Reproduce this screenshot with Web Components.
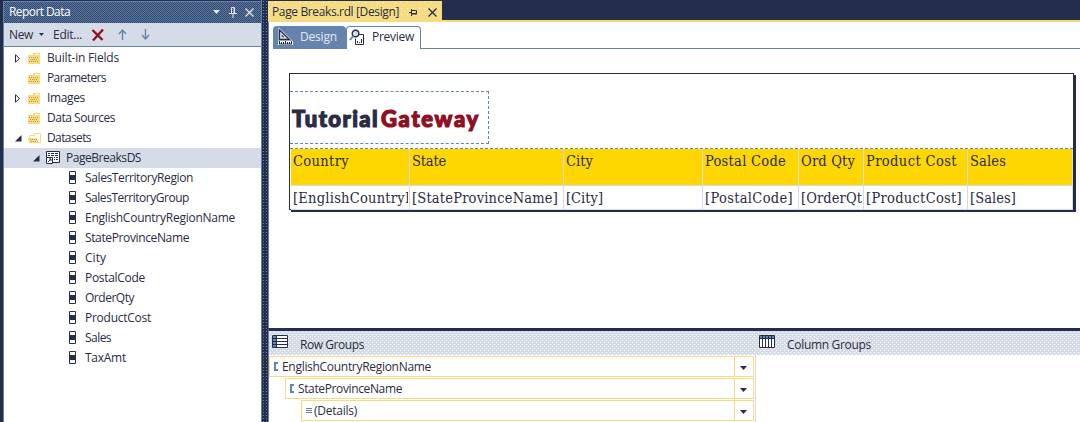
<!DOCTYPE html>
<html lang="en"><head><meta charset="utf-8"><title>Page Breaks.rdl [Design]</title>
<style>
html,body{margin:0;height:422px;overflow:hidden}
body{background:#242d49;color:#292c42;font:12px/20px "Open Sans","Noto Sans",sans-serif}
</style></head><body>
<report-designer></report-designer>
<script>
const define=(name,make,after)=>customElements.define(name,class extends HTMLElement{
  connectedCallback(){
    if(this.shadowRoot)return;
    this.attachShadow({mode:'open'}).innerHTML=make(this);
    if(after)after(this);
  }
});

/* A label whose letter spacing is set so that it fills the width in "w". */
define('fit-label',()=>`<style>:host{display:inline-block;white-space:pre;flex:none}</style><span><slot></slot></span>`,el=>{
  const w=+el.getAttribute('w'),n=el.textContent.length;
  const span=el.shadowRoot.querySelector('span');
  if(w)el.style.letterSpacing=((w-span.getBoundingClientRect().width)/n).toFixed(3)+'px';
});

const icons={
  folder:[14,12,'<path d="M0 3h5V1h7v11H0z" fill="#f5dc83"/><path d="M7 2.500h4" stroke="#fff"/><path d="M1 5.500h9M2 7.500h8M1 9.500h9" stroke="#c79132" stroke-dasharray="1 1"/>'],
  openfolder:[14,12,'<path d="M1.500 10.500v-7h5v-2h6v9z" fill="#fff" stroke="#f5dc83"/><path d="M0 6h9l2 5H1z" fill="#f5dc83"/><path d="M2 7.500h7M3 9.500h6" stroke="#c79132" stroke-dasharray="1 1"/>'],
  dataset:[14,13,'<path d="M.5 6V.5h13v11H7" fill="#fff" stroke="#242d49"/><path d="M2 2.500h2m1 0h3m1 0h3M2 4.500h2m1 0h3m1 0h3M8 6.500h1m1 0h2M8 8.500h1m1 0h2" stroke="#242d49"/><path d="M.5 6.500h6v6h-6z" fill="#fff" stroke="#242d49"/><path d="M2 11l3-3M3 8h2v2" fill="none" stroke="#242d49"/>'],
  field:[7,13,'<path d="M.5.5h6v12h-6z" fill="#fff" stroke="#242d49"/><path d="M0 4h7v5H0z" fill="#242d49"/>'],
  closed:[6,9,'<path d="M.5.8v7.400l4-3.700z" fill="#fff" stroke="#292c42"/>'],
  opened:[7,7,'<path d="M6.500 0v6.500H0z" fill="#242d49"/>'],
  caret:[7,4,'<path d="M0 0h7L3.500 4z" fill="currentColor"/>'],
  small:[5,3,'<path d="M0 0h5L2.500 3z" fill="#242d49"/>'],
  pin:[8,11,'<path d="M2.500 6V.5h3V6M0 6.500h8M4 7v4" fill="none" stroke="currentColor"/><path d="M5 1v5" stroke="currentColor"/>'],
  hpin:[8,7,'<path d="M0 3.500h3M2.500 0v7M3 1.500h4.500v3H3M3 5h5" fill="none" stroke="currentColor"/>'],
  close:[9,9,'<path d="M.5.5l8 8m0-8l-8 8" fill="none" stroke="currentColor" stroke-width="1.300"/>'],
  del:[14,14,'<path d="M1.500 2l10 10M12 1.500L2 12.500" stroke="#8e1022" stroke-width="2.400"/>'],
  up:[9,11,'<path d="M4.500 11V1M1 5l3.500-4L8 5" fill="none" stroke="#6584ad" stroke-width="1.400"/>'],
  down:[9,11,'<path d="M4.500 0v10M1 6l3.500 4L8 6" fill="none" stroke="#6584ad" stroke-width="1.400"/>'],
  ruler:[15,16,'<path d="M1.500 1v9.500h10z" fill="none" stroke="#d5dce7" stroke-width="2.500"/><path d="M1.500 1v9.500h10z" fill="#d5dce7" stroke="#242d49" stroke-width="1.300"/><path d="M4 6v2h2z" fill="#6584ad" stroke="#242d49" stroke-width=".5"/><path d="M0 12h15v4H0z" fill="#fff"/><path d="M1 15h13M1.500 12v3m2-2v2m2-2v2m2-3v3m2-2v2m2-2v2m2-3v3" stroke="#242d49"/>'],
  preview:[16,16,'<path d="M7 5.500h7.500v10h-8v-6" fill="#fff" stroke="#242d49"/><circle cx="6.500" cy="4.500" r="3.300" fill="#d5dce7" stroke="#242d49" stroke-width="1.400"/><path d="M4.200 7L1 11" stroke="#6584ad" stroke-width="2"/><path d="M8.500 14v-2m2 2v-1m2 1v-4" stroke="#242d49"/>'],
  rows:[16,13,'<path d="M.5.5h15v12H.5z" fill="#fff" stroke="#242d49"/><path d="M1 1h3v11H1z" fill="#6584ad"/><path d="M0 3.500h16M0 6.500h16M0 9.500h16M4.500 0v13" stroke="#242d49"/>'],
  cols:[16,13,'<path d="M.5.5h15v12H.5z" fill="#fff" stroke="#242d49"/><path d="M1 1h14v2H1z" fill="#6584ad"/><path d="M0 3.500h16M3.500 1v12M6.500 1v12M9.500 1v12M12.500 1v12" stroke="#242d49"/>'],
  bracket:[4,9,'<path d="M4 1H1v7h3" fill="none" stroke="#6584ad" stroke-width="2"/>'],
  details:[6,5,'<path d="M0 .5h6M0 2.500h6M0 4.500h6" stroke="#6584ad"/>']
};
define('ui-icon',el=>{
  const [w,h,d]=icons[el.getAttribute('name')];
  return `<style>:host{display:block;flex:none;width:${w}px;height:${h}px}svg{display:block;overflow:visible}</style><svg width="${w}" height="${h}" viewBox="0 0 ${w} ${h}">${d}</svg>`;
});

define('tree-row',el=>{
  const a=n=>el.getAttribute(n);
  return `<style>
  :host{display:flex;height:20px;align-items:center;padding-left:${a('indent')}px;background:${el.hasAttribute('selected')?'#d5dce7':'none'}}
  .arrow{width:${a('icon')==='field'?0:13}px}.ic{margin-top:-1px;width:${a('icon')==='field'?16:a('icon')==='dataset'?20:19}px}
  </style><div class="arrow">${a('arrow')?`<ui-icon name="${a('arrow')}"></ui-icon>`:''}</div><div class="ic"><ui-icon name="${a('icon')}"></ui-icon></div><fit-label w="${a('w')}">${a('label')}</fit-label>`;
});

const tree=[
 ['Built-in Fields',72,11,'folder','closed'],['Parameters',59,11,'folder',''],['Images',38,11,'folder','closed'],
 ['Data Sources',68,11,'folder',''],['Datasets',44,11,'openfolder','opened'],['PageBreaksDS',75,29,'dataset','opened',1],
 ...[['SalesTerritoryRegion',108],['SalesTerritoryGroup',104],['EnglishCountryRegionName',150],['StateProvinceName',104],['City',21],['PostalCode',60],['OrderQty',49],['ProductCost',66],['Sales',26],['TaxAmt',41]].map(r=>[...r,65,'field',''])
];
define('report-data-panel',()=>`<style>
 :host{display:flex;flex-direction:column;width:257px;margin-top:1px;height:421px;background:#fff;border-left:1px solid #6584ad;box-sizing:content-box}
 header{display:flex;align-items:center;height:22px;box-sizing:border-box;padding:0 7px 1px 5px;color:#fff;border-top:1px solid #6584ad;
   background:conic-gradient(#5877a2 25%,#34486b 0 50%,#5877a2 0 75%,#34486b 0) 0 0/2px 2px}
 header fit-label{margin-right:auto}header ui-icon{color:#e4e9f1}
 nav{display:flex;align-items:center;height:24px;box-sizing:border-box;padding-left:5px;background:#d5dce7;border-bottom:1px solid #6584ad}
 main{padding-top:1px}
</style><header><fit-label w="61">Report Data</fit-label><ui-icon name="caret"></ui-icon><ui-icon name="pin" style="margin-left:9px"></ui-icon><ui-icon name="close" style="margin-left:8px"></ui-icon></header>
<nav><fit-label w="24">New</fit-label><ui-icon name="small" style="margin-left:6px"></ui-icon><fit-label w="29" style="margin-left:9px">Edit...</fit-label><ui-icon name="del" style="margin-left:9px"></ui-icon><ui-icon name="up" style="margin-left:13px"></ui-icon><ui-icon name="down" style="margin-left:14px"></ui-icon></nav>
<main>${tree.map(([l,w,i,ic,ar,s])=>`<tree-row label="${l}" w="${w}" indent="${i}" icon="${ic}" arrow="${ar}" ${s?'selected':''}></tree-row>`).join('')}</main>`);

define('tab-strip',()=>`<style>
 :host{display:block}
 .doc{display:flex;align-items:center;box-sizing:border-box;width:174px;height:19px;margin-top:1px;padding:3px 0 0 4px;background:radial-gradient(circle at 1.500px 1.500px,#fff5ce .6px,transparent .8px) 0 0/6px 6px,#f5dc83}
 .line{height:2px;background:#f5dc83}
 .modes{display:flex;background:#fff;height:27px;box-sizing:border-box;padding:4px 0 0 4px;border-left:1px solid #6584ad}
 .modes>div{display:flex;align-items:center;box-sizing:border-box;height:23px;border-bottom:1px solid #6584ad;padding-bottom:1px}
 .modes .design{width:73px;padding-left:5px;color:#e4e9f1;background:#6584ad;border-radius:4px 4px 0 0}
 .modes .preview{width:75px;padding:0 0 2px 3px;border:1px solid #6584ad;border-bottom:0;border-radius:4px 4px 0 0}
 .rest{flex:1}
</style><div class="doc"><fit-label w="127">Page Breaks.rdl [Design]</fit-label><ui-icon name="hpin" style="margin-left:10px"></ui-icon><ui-icon name="close" style="margin-left:11px"></ui-icon></div><div class="line"></div>
<div class="modes"><div class="design"><ui-icon name="ruler"></ui-icon><fit-label w="37" style="margin-left:7px">Design</fit-label></div><div class="preview"><ui-icon name="preview" style="margin-left:-1px"></ui-icon><fit-label w="42" style="margin-left:7px">Preview</fit-label></div><div class="rest"></div></div>`);

const cols=[['Country',56,'[EnglishCountryR',122,119],['State',34,'[StateProvinceName]',146,154],['City',27,'[City]',37,139],['Postal Code',81,'[PostalCode]',88,96],['Ord Qty',54,'[OrderQt',61,65],['Product Cost',91,'[ProductCost]',96,104],['Sales',36,'[Sales]',46,105]];
define('report-canvas',()=>`<style>
 :host{display:block;background:#fff;height:279px;box-sizing:border-box;padding:24px 0 0 20px;border-left:1px solid #6584ad}
 .page{height:135px;border:1px solid #242d49;box-shadow:2px 2px 0 #242d49;background:#fff;box-sizing:content-box;width:783px}
 .logo{box-sizing:border-box;width:199px;height:53px;margin-top:17px;padding:13px 0 0 2px;border:1px dashed #6584ad;border-left:0;font:900 22px/28px "Lato",sans-serif;display:flex;-webkit-text-stroke:1.200px currentColor}
 .logo b{font-weight:900;color:#8e1022}
 .table{display:grid;grid-template-columns:${cols.map(c=>c[4]+'px').join(' ')};grid-template-rows:37px 24px;margin-top:4px;padding-left:1px;border-top:1px dashed #6584ad;font:14.500px/18px "DejaVu Serif Condensed","DejaVu Serif",serif}
 .table div{box-sizing:border-box;overflow:hidden;border-right:1px solid #d5dce7;border-bottom:1px solid #d5dce7;padding:3px 1px 0 2px}
 .table .h{background:gold}
 .clip{display:block;overflow:hidden;height:19px}
</style><div class="page"><div class="logo"><fit-label w="87">Tutorial</fit-label><b style="margin-left:2px"><fit-label w="99">Gateway</fit-label></b></div>
<div class="table">${cols.map(c=>`<div class="h"><fit-label w="${c[1]}">${c[0]}</fit-label></div>`).join('')}${cols.map(c=>`<div class="v"><span class="clip"><fit-label w="${c[3]}">${c[2]}</fit-label></span></div>`).join('')}</div></div>`);

define('group-row',el=>`<style>
 :host{display:block;margin:0 1px 1px ${el.getAttribute('indent')}px}
 .row{display:flex;align-items:center;box-sizing:border-box;height:21px;border:1px solid #f5dc83;padding-left:4px;background:#fff}
 .drop{display:flex;align-items:center;box-sizing:border-box;padding-left:5px;width:19px;height:100%;margin-left:auto;border-left:1px solid #f5dc83}
</style><div class="row"><ui-icon name="${el.getAttribute('icon')}"></ui-icon><fit-label w="${el.getAttribute('w')}" style="margin-left:${el.getAttribute('gap')}px">${el.getAttribute('label')}</fit-label><div class="drop"><ui-icon name="caret" style="margin-top:3px"></ui-icon></div></div>`);

define('grouping-pane',()=>`<style>
 :host{display:block;height:94px;background:#fff;border-top:3px solid #242d49;box-sizing:border-box;border-left:1px solid #6584ad}
 header{display:grid;grid-template-columns:487px 1fr;height:24px;background:radial-gradient(circle at 1.500px 1.500px,#fff .5px,transparent .8px) 0 0/4px 4px,radial-gradient(circle at 1.500px 1.500px,#fff .5px,transparent .8px) 2px 2px/4px 4px,#d5dce7}
 header div{display:flex;align-items:center;padding-left:3px}header ui-icon{margin-top:-3px}
 main{display:flex}.rows{width:486px;padding-top:1px;border-right:1px solid #d5dce7;height:69px}
</style><header><div><ui-icon name="rows"></ui-icon><fit-label w="64" style="margin:3px 0 0 12px">Row Groups</fit-label></div><div><ui-icon name="cols"></ui-icon><fit-label w="84" style="margin:3px 0 0 12px">Column Groups</fit-label></div></header>
<main><div class="rows"><group-row label="EnglishCountryRegionName" w="149" icon="bracket" indent="0" gap="4"></group-row><group-row label="StateProvinceName" w="104" icon="bracket" indent="16" gap="4"></group-row><group-row label="(Details)" w="43" icon="details" indent="32" gap="2"></group-row></div></main>`);

define('report-designer',()=>`<style>
 :host{display:grid;grid-template-columns:258px 7px 1fr;height:422px;padding-left:3px}
 .split{background:radial-gradient(circle,#6584ad .5px,transparent .8px) 0 0/3px 3px,#242d49;border-left:1px solid #6584ad}
 .work{min-width:0}
</style><report-data-panel></report-data-panel><div class="split"></div><div class="work"><tab-strip></tab-strip><report-canvas></report-canvas><grouping-pane></grouping-pane></div>`);
</script></body></html>
